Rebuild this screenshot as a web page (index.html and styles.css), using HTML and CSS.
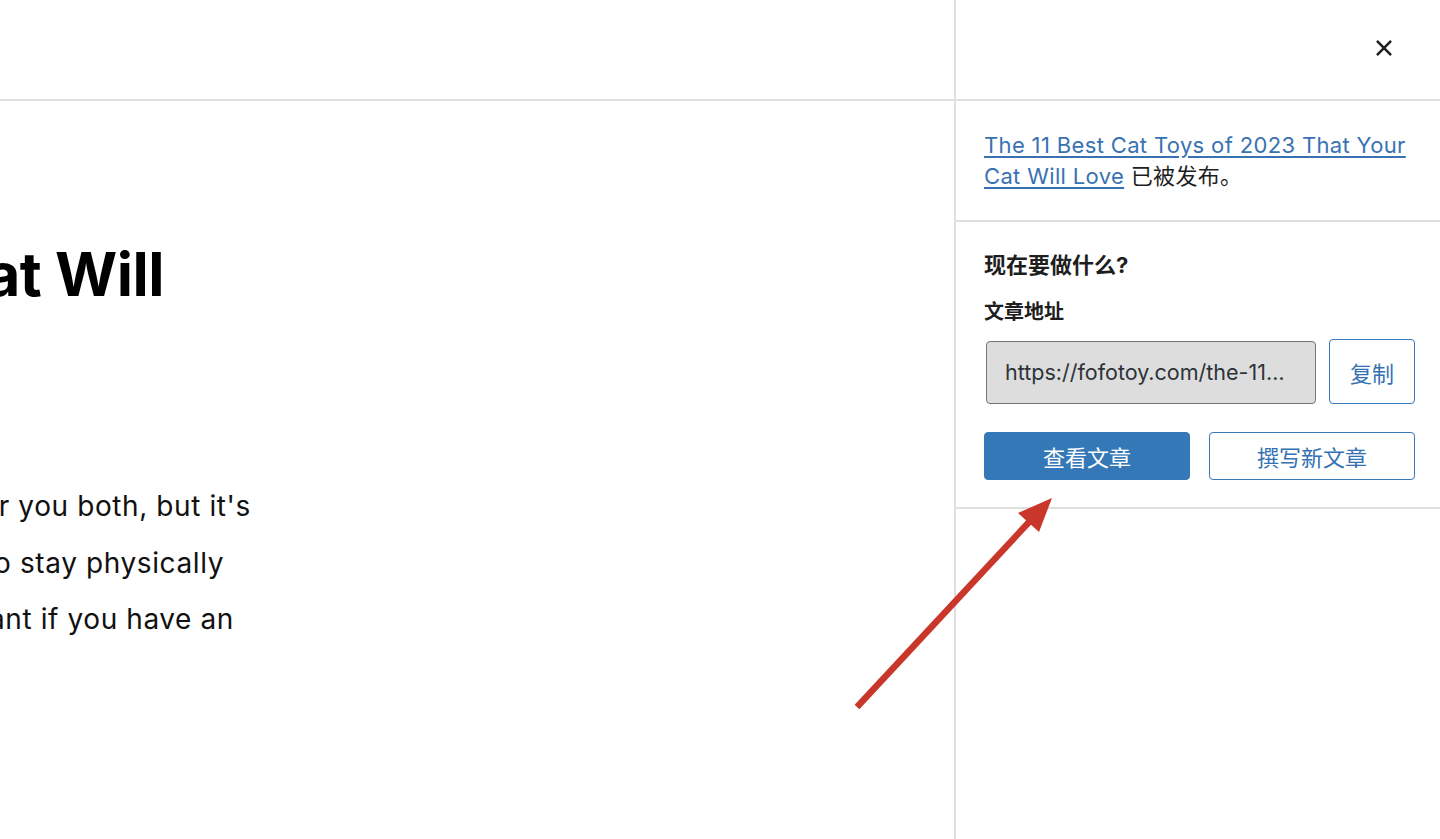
FILE: index.html
```html
<!DOCTYPE html>
<html lang="zh-CN">
<head>
<meta charset="utf-8">
<title>已发布</title>
<link rel="stylesheet" href="styles.css">
</head>
<body>
<div class="app">
  <main class="editor">
    <div class="editor-top"></div>
    <div class="canvas">
      <div class="content">
        <h1 class="title">
          <span class="line line-off">The 11 Best Cat Toys of 2023</span>
          <span class="line line-h">That Your Cat Will</span>
          <span class="line line-off">Love</span>
        </h1>
        <p class="para">
          <span class="line line-p1">Playing with your cat is a great way to have fun and bond for you both, but it's</span>
          <span class="line line-p2">also one of the best ways to help your feline friend to stay physically</span>
          <span class="line line-p3">and mentally healthy. This is especially important if you have an</span>
        </p>
      </div>
    </div>
  </main>

  <aside class="sidebar">
    <div class="sidebar-header">
      <button class="close" type="button" aria-label="关闭">
        <svg viewBox="0 0 24 24" width="40" height="40" aria-hidden="true"><path d="M12 13.06l3.712 3.713 1.061-1.06L13.061 12l3.712-3.712-1.06-1.06L12 10.938 8.288 7.227l-1.061 1.06L10.939 12l-3.712 3.712 1.06 1.061L12 13.061z"/></svg>
      </button>
    </div>
    <section class="panel panel-notice">
      <p><a href="#" class="post-link">The 11 Best Cat Toys of 2023 That Your Cat Will Love</a> 已被发布。</p>
    </section>
    <section class="panel panel-next">
      <h2 class="panel-title">现在要做什么?</h2>
      <div class="field-label">文章地址</div>
      <div class="url-row">
        <div class="url-input">https://fofotoy.com/the-11-best-cat-toys-of-2023-that-your-cat-will-love/</div>
        <button class="btn btn-outline btn-copy" type="button">复制</button>
      </div>
      <div class="actions">
        <a href="#" class="btn btn-primary">查看文章</a>
        <a href="#" class="btn btn-outline">撰写新文章</a>
      </div>
    </section>
  </aside>

  <svg class="annotation" viewBox="0 0 1440 839" width="1440" height="839" aria-hidden="true">
    <line x1="857" y1="707" x2="1030" y2="521" stroke="#c9372a" stroke-width="6.5"/>
    <polygon points="1052,498 1018,513 1039,532" fill="#c9372a"/>
  </svg>
</div>
</body>
</html>
```

FILE: styles.css
```css
html, body {
  margin: 0;
  padding: 0;
  background: #ffffff;
}

body {
  font-family: "Inter", "Noto Sans CJK SC", sans-serif;
  color: #1e1e1e;
}

.app {
  position: relative;
  display: flex;
  width: 1440px;
  height: 839px;
  overflow: hidden;
}

/* ---------- editor ---------- */
.editor {
  width: 954px;
  flex: none;
  display: flex;
  flex-direction: column;
  min-width: 0;
}

.editor-top {
  height: 99px;
  border-bottom: 2px solid #e0e0e0;
  flex: none;
}

.canvas {
  flex: 1;
  overflow: hidden;
}

.content {
  padding-top: 65px;
}

.line {
  display: flex;
  justify-content: flex-end;
  white-space: nowrap;
}

.title {
  margin: 0;
  font-size: 60px;
  font-weight: 700;
  line-height: 72px;
  letter-spacing: -0.5px;
  color: #000;
}

.line-off { width: 0; }
.line-h { width: 164px; }

.para {
  margin: 96px 0 0;
  font-size: 28px;
  line-height: 56.5px;
  letter-spacing: 0.6px;
  color: #111;
}

.line-p1 { width: 251px; }
.line-p2 { width: 224px; }
.line-p3 { width: 234px; }

/* ---------- sidebar ---------- */
.sidebar {
  flex: none;
  width: 486px;
  min-width: 0;
  box-sizing: border-box;
  border-left: 2px solid #e0e0e0;
  display: flex;
  flex-direction: column;
}

.sidebar-header {
  height: 101px;
  box-sizing: border-box;
  border-bottom: 2px solid #e0e0e0;
  display: flex;
  align-items: center;
  justify-content: flex-end;
  padding: 0 36px 3px 0;
}

.close {
  width: 40px;
  height: 40px;
  padding: 0;
  border: 0;
  background: none;
  display: flex;
  align-items: center;
  justify-content: center;
}

.close svg {
  fill: #1e1e1e;
}

.panel {
  padding: 29px 25px 28px 28px;
  border-bottom: 2px solid #e0e0e0;
}

.panel-next {
  padding-bottom: 27px;
}

.panel-notice p {
  margin: 0;
  font-size: 22px;
  line-height: 31px;
  letter-spacing: 0.35px;
  color: #1e1e1e;
}

.post-link {
  color: #3872b3;
  text-decoration: underline;
  text-decoration-thickness: 2px;
  text-underline-offset: 3px;
}

.panel-title {
  margin: 0;
  font-size: 22px;
  line-height: 29px;
  font-weight: 700;
  color: #1e1e1e;
}

.field-label {
  margin-top: 19px;
  font-size: 20px;
  line-height: 26px;
  font-weight: 600;
  color: #1e1e1e;
}

.url-row {
  margin-top: 14px;
  display: flex;
  align-items: flex-end;
  gap: 13px;
}

.url-input {
  flex: 1;
  min-width: 0;
  margin-left: 2px;
  height: 63px;
  box-sizing: border-box;
  padding: 0 24px 0 18px;
  border: 1.5px solid #757575;
  border-radius: 4px;
  background: #dddddd;
  font-size: 21.5px;
  line-height: 60px;
  color: #2c3338;
  white-space: nowrap;
  overflow: hidden;
  text-overflow: ellipsis;
}

.btn {
  box-sizing: border-box;
  display: flex;
  align-items: center;
  justify-content: center;
  border-radius: 4px;
  font-family: inherit;
  font-size: 22px;
  text-decoration: none;
  cursor: pointer;
}

.btn-outline {
  background: #fff;
  border: 1.5px solid #3a78b9;
  color: #3471b2;
}

.btn-primary {
  background: #3578b7;
  border: 1.5px solid #3578b7;
  color: #fff;
}

.btn-copy {
  width: 86px;
  height: 65px;
  flex: none;
  padding: 0;
}

.actions {
  margin-top: 28px;
  display: grid;
  grid-template-columns: 1fr 1fr;
  gap: 19px;
}

.actions .btn {
  height: 48px;
}

/* ---------- annotation overlay ---------- */
.annotation {
  position: absolute;
  left: 0;
  top: 0;
  pointer-events: none;
}
```
